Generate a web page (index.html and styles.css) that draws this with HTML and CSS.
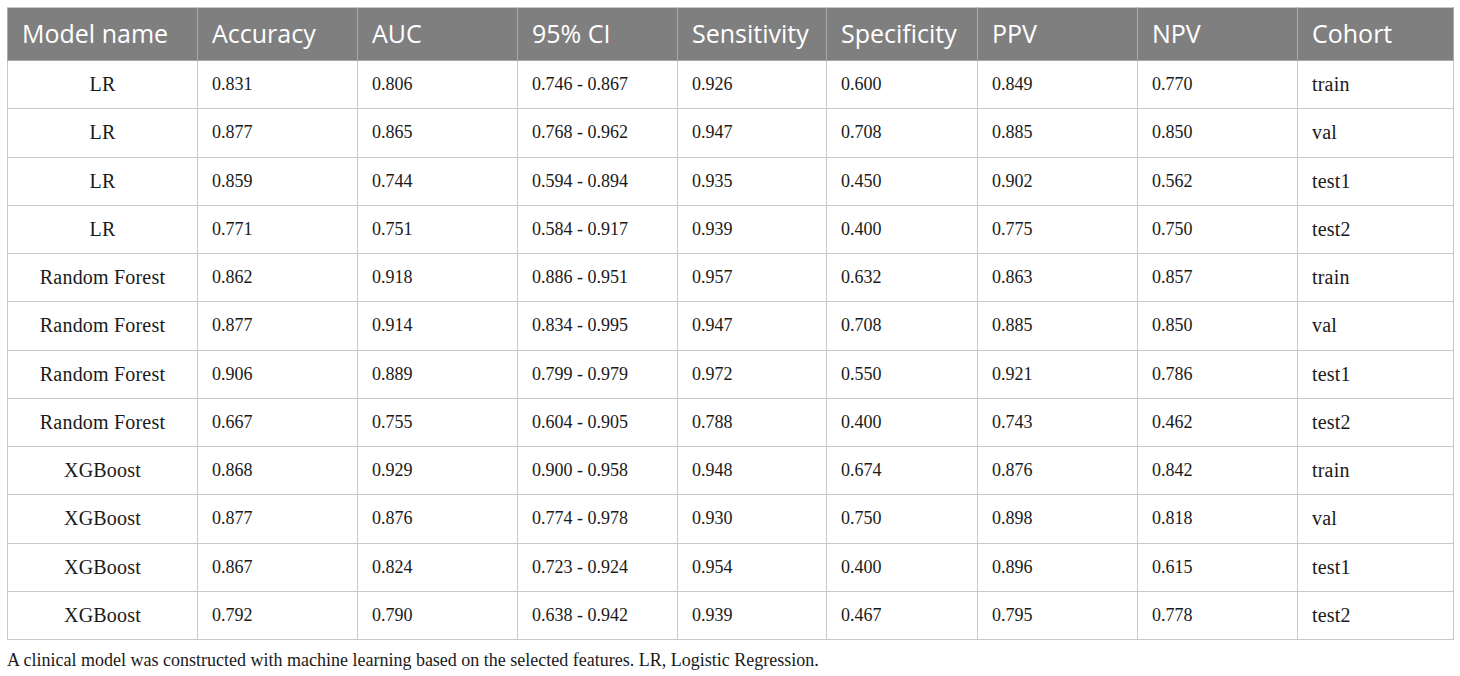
FILE: index.html
```html
<!DOCTYPE html>
<html lang="en">
<head>
  <meta charset="UTF-8" />
  <meta name="viewport" content="width=device-width, initial-scale=1.0" />
  <title>Model performance</title>
  <link rel="stylesheet" href="styles.css">
</head>
<body>
  <div class="table-wrap">
    <table class="results">
      <colgroup>
        <col class="c-model">
        <col class="c-num">
        <col class="c-num">
        <col class="c-num">
        <col class="c-sens">
        <col class="c-spec">
        <col class="c-num">
        <col class="c-num">
        <col class="c-cohort">
      </colgroup>
      <thead>
        <tr>
          <th>Model name</th>
          <th>Accuracy</th>
          <th>AUC</th>
          <th>95% CI</th>
          <th>Sensitivity</th>
          <th>Specificity</th>
          <th>PPV</th>
          <th>NPV</th>
          <th>Cohort</th>
        </tr>
      </thead>
      <tbody>
        <tr><td class="model">LR</td><td>0.831</td><td>0.806</td><td>0.746 - 0.867</td><td>0.926</td><td>0.600</td><td>0.849</td><td>0.770</td><td class="word">train</td></tr>
        <tr><td class="model">LR</td><td>0.877</td><td>0.865</td><td>0.768 - 0.962</td><td>0.947</td><td>0.708</td><td>0.885</td><td>0.850</td><td class="word">val</td></tr>
        <tr><td class="model">LR</td><td>0.859</td><td>0.744</td><td>0.594 - 0.894</td><td>0.935</td><td>0.450</td><td>0.902</td><td>0.562</td><td class="word">test1</td></tr>
        <tr><td class="model">LR</td><td>0.771</td><td>0.751</td><td>0.584 - 0.917</td><td>0.939</td><td>0.400</td><td>0.775</td><td>0.750</td><td class="word">test2</td></tr>
        <tr><td class="model">Random Forest</td><td>0.862</td><td>0.918</td><td>0.886 - 0.951</td><td>0.957</td><td>0.632</td><td>0.863</td><td>0.857</td><td class="word">train</td></tr>
        <tr><td class="model">Random Forest</td><td>0.877</td><td>0.914</td><td>0.834 - 0.995</td><td>0.947</td><td>0.708</td><td>0.885</td><td>0.850</td><td class="word">val</td></tr>
        <tr><td class="model">Random Forest</td><td>0.906</td><td>0.889</td><td>0.799 - 0.979</td><td>0.972</td><td>0.550</td><td>0.921</td><td>0.786</td><td class="word">test1</td></tr>
        <tr><td class="model">Random Forest</td><td>0.667</td><td>0.755</td><td>0.604 - 0.905</td><td>0.788</td><td>0.400</td><td>0.743</td><td>0.462</td><td class="word">test2</td></tr>
        <tr><td class="model">XGBoost</td><td>0.868</td><td>0.929</td><td>0.900 - 0.958</td><td>0.948</td><td>0.674</td><td>0.876</td><td>0.842</td><td class="word">train</td></tr>
        <tr><td class="model">XGBoost</td><td>0.877</td><td>0.876</td><td>0.774 - 0.978</td><td>0.930</td><td>0.750</td><td>0.898</td><td>0.818</td><td class="word">val</td></tr>
        <tr><td class="model">XGBoost</td><td>0.867</td><td>0.824</td><td>0.723 - 0.924</td><td>0.954</td><td>0.400</td><td>0.896</td><td>0.615</td><td class="word">test1</td></tr>
        <tr><td class="model">XGBoost</td><td>0.792</td><td>0.790</td><td>0.638 - 0.942</td><td>0.939</td><td>0.467</td><td>0.795</td><td>0.778</td><td class="word">test2</td></tr>
      </tbody>
    </table>
    <p class="caption">A clinical model was constructed with machine learning based on the selected features. LR, Logistic Regression.</p>
  </div>
</body>
</html>
```

FILE: styles.css
```css
* {
  box-sizing: border-box;
}
body {
  margin: 0;
  padding: 0;
  background: #fff;
  font-family: 'Liberation Serif', 'Times New Roman', serif;
  color: #1a1a1a;
}
.table-wrap {
  padding: 7px 7px 0 7px;
}
.results {
  width: 1446px;
  border-collapse: collapse;
  table-layout: fixed;
}
.c-model { width: 190px; }
.c-num { width: 160px; }
.c-sens { width: 149px; }
.c-spec { width: 151px; }
.c-cohort { width: 156px; }
.results th {
  height: 53px;
  background: #7f7f7f;
  color: #fff;
  font-family: 'Open Sans', sans-serif;
  font-weight: 400;
  font-size: 25px;
  text-align: left;
  padding: 0 0 2px 14px;
  border: 1px solid #a9a9a9;
  border-top-color: #c8c8c8;
  white-space: nowrap;
}
.results td {
  height: 48.25px;
  padding: 0 0 0 14px;
  font-size: 18px;
  border: 1px solid #c9c9c9;
  white-space: nowrap;
}
.results td.word {
  font-size: 20px;
  letter-spacing: 0.2px;
}
.results td.model {
  text-align: center;
  padding: 0;
  font-size: 20px;
  letter-spacing: 0.2px;
}
.caption {
  margin: 10px 0 0 0;
  font-size: 18px;
  color: #1a1a1a;
}
```
